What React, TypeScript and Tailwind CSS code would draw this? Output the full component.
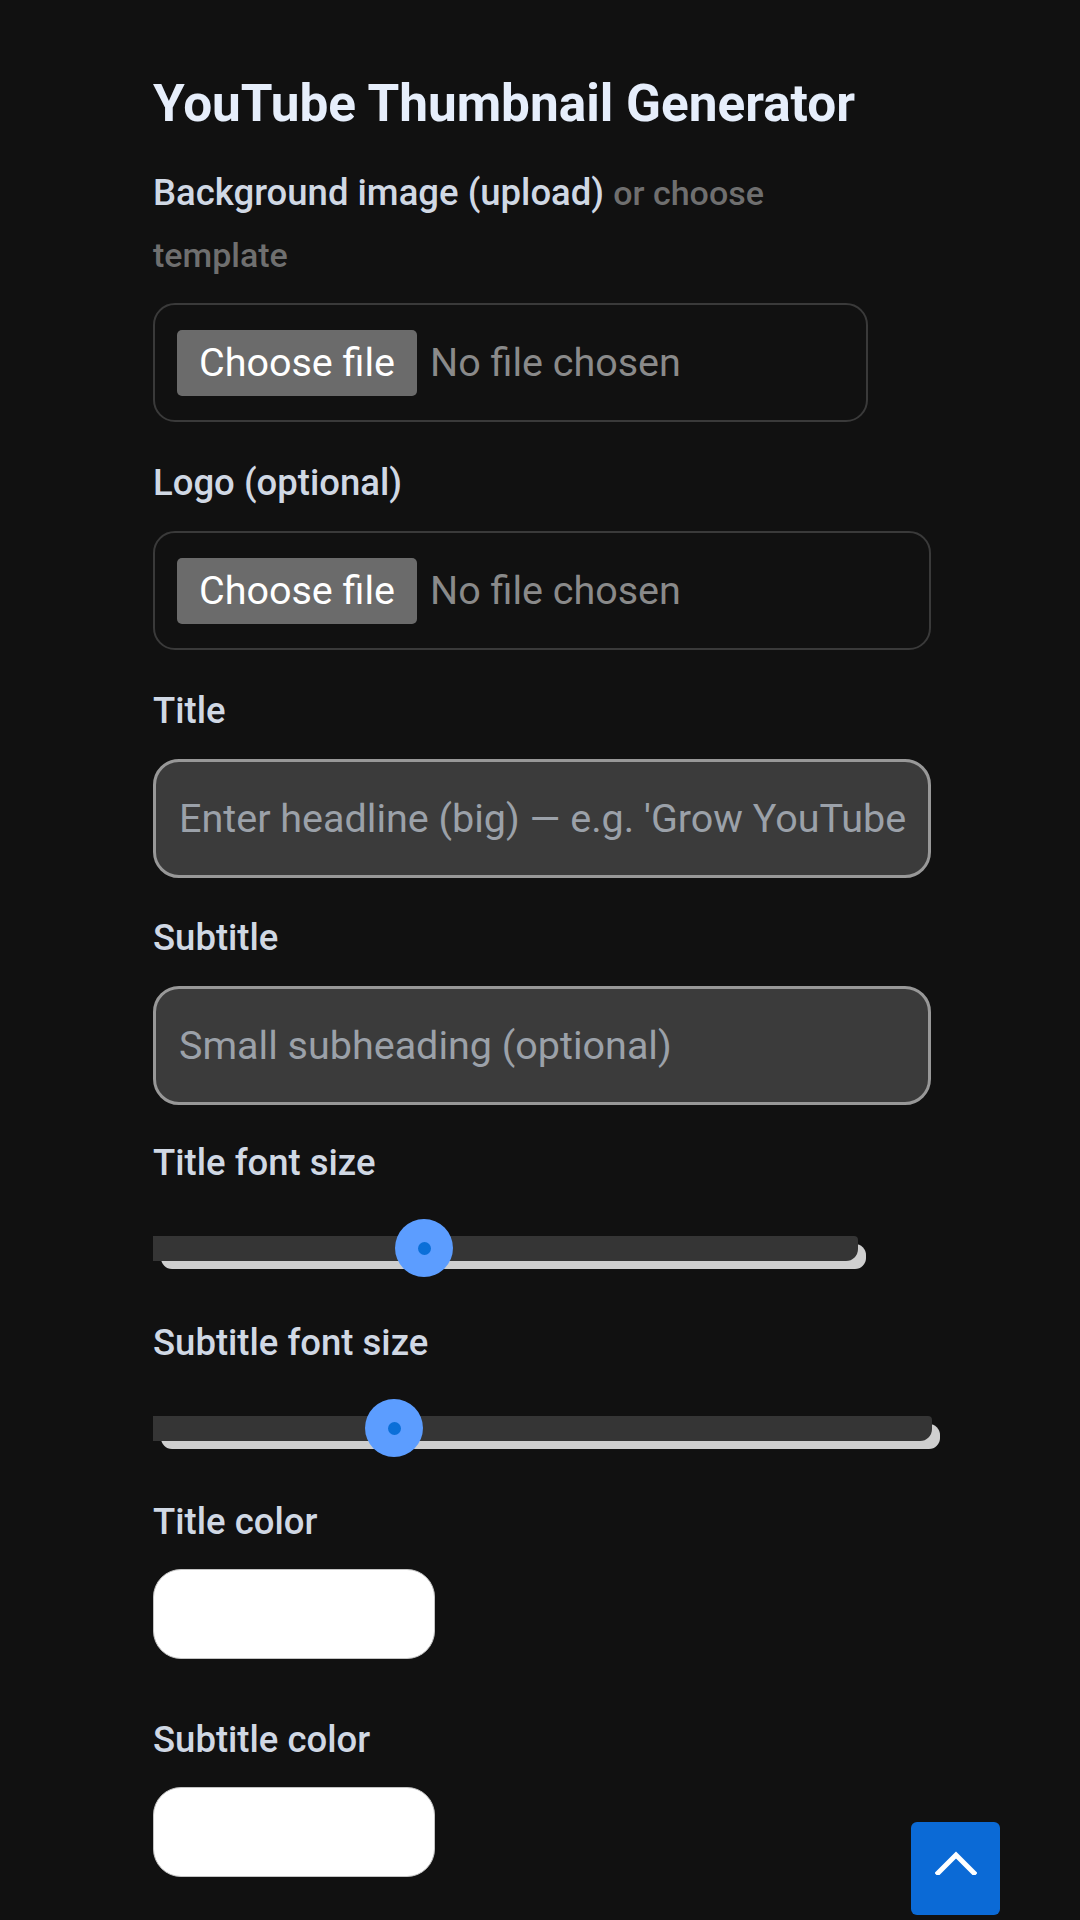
import React from 'react';

const labelCls = 'block pt-[3px] text-[36.5px] leading-[62px] font-medium text-[#d0d8e4]';

const FilePicker = ({ className = '' }: { className?: string }) => (
  <div
    className={`mt-[17px] flex h-[119px] items-center rounded-[22px] border-2 border-[#3a3a3a] pl-[22px] ${className}`}
  >
    <span className="flex h-[66px] w-[240px] items-center justify-center rounded-[5px] bg-[#6b6b6b] text-[39.5px] text-white">
      Choose file
    </span>
    <span className="ml-[13px] text-[39.5px] text-[#8a8a8a]">No file chosen</span>
  </div>
);

const TextField = ({ placeholder }: { placeholder: string }) => (
  <input
    type="text"
    placeholder={placeholder}
    className="mt-[17px] block h-[119px] w-full rounded-[26px] border-[3px] border-[#989898] bg-[#3b3b3b] pl-[23px] pr-[20px] text-[39.5px] text-white outline-none placeholder:text-[#9ba1a9]"
  />
);

const Slider = ({ width, thumbLeft }: { width: string; thumbLeft: string }) => (
  <div className={`relative mt-[20px] flex h-[68px] items-center ${width}`}>
    <div className="relative h-[25px] w-full">
      <div className="absolute left-[8px] top-[8px] h-full w-full rounded-[11px] bg-[#cfcfcf]" />
      <div className="absolute inset-0 rounded-tr-[4px] rounded-br-[12px] bg-[#353535]" />
    </div>
    <div
      className={`absolute top-1/2 flex h-[58px] w-[58px] -translate-y-1/2 items-center justify-center rounded-full bg-[#5c9dff] ${thumbLeft}`}
    >
      <div className="h-[13px] w-[13px] rounded-full bg-[#0b6fd8]" />
    </div>
  </div>
);

const ColorSwatch = () => (
  <div className="h-[90px] w-[282px] rounded-[28px] border border-[#c4c4c4] bg-white" />
);

export default function App() {
  return (
    <div className="relative min-h-[1920px] overflow-hidden bg-[#111111] font-['Roboto',sans-serif]">
      <div className="w-[931px] pl-[153px] pt-[72px]">
        <h1 className="text-[51.3px] leading-[64px] font-bold text-[#e6eefb]">
          YouTube Thumbnail Generator
        </h1>

        <div className="mt-[23px] max-w-[715px]">
          <p className={labelCls}>
            <span>Background image (upload)</span>{' '}
            <span className="text-[34px] text-[#6f6f6f]">or choose</span>
            <br />
            <span className="text-[34px] text-[#6f6f6f]">template</span>
          </p>
          <FilePicker />
        </div>

        <div className="mt-[27px]">
          <p className={labelCls}>Logo (optional)</p>
          <FilePicker />
        </div>

        <div className="mt-[27px]">
          <p className={labelCls}>Title</p>
          <TextField placeholder="Enter headline (big) — e.g. 'Grow YouTube Fast'" />
        </div>

        <div className="mt-[26px]">
          <p className={labelCls}>Subtitle</p>
          <TextField placeholder="Small subheading (optional)" />
        </div>

        <div className="mt-[24px]">
          <p className={labelCls}>Title font size</p>
          <Slider width="w-[705px]" thumbLeft="left-[242px]" />
        </div>

        <div className="mt-[27px]">
          <p className={labelCls}>Subtitle font size</p>
          <Slider width="w-[779px]" thumbLeft="left-[212px]" />
        </div>

        <div className="mt-[26px]">
          <p className={labelCls}>Title color</p>
          <div className="mt-[16px]">
            <ColorSwatch />
          </div>
        </div>

        <div className="mt-[47px]">
          <p className={labelCls}>Subtitle color</p>
          <div className="mt-[16px]">
            <ColorSwatch />
          </div>
        </div>
      </div>

      <button
        type="button"
        aria-label="Back to top"
        className="absolute left-[911px] top-[1822px] flex h-[93px] w-[89px] items-center justify-center rounded-[6px] bg-[#0b6ad6] pb-[12px]"
      >
        <svg width="42" height="24" viewBox="0 0 42 24" fill="none">
          <polyline
            points="3,22 21,4 39,22"
            stroke="white"
            strokeWidth="5"
            strokeLinecap="square"
            strokeLinejoin="miter"
          />
        </svg>
      </button>
    </div>
  );
}
